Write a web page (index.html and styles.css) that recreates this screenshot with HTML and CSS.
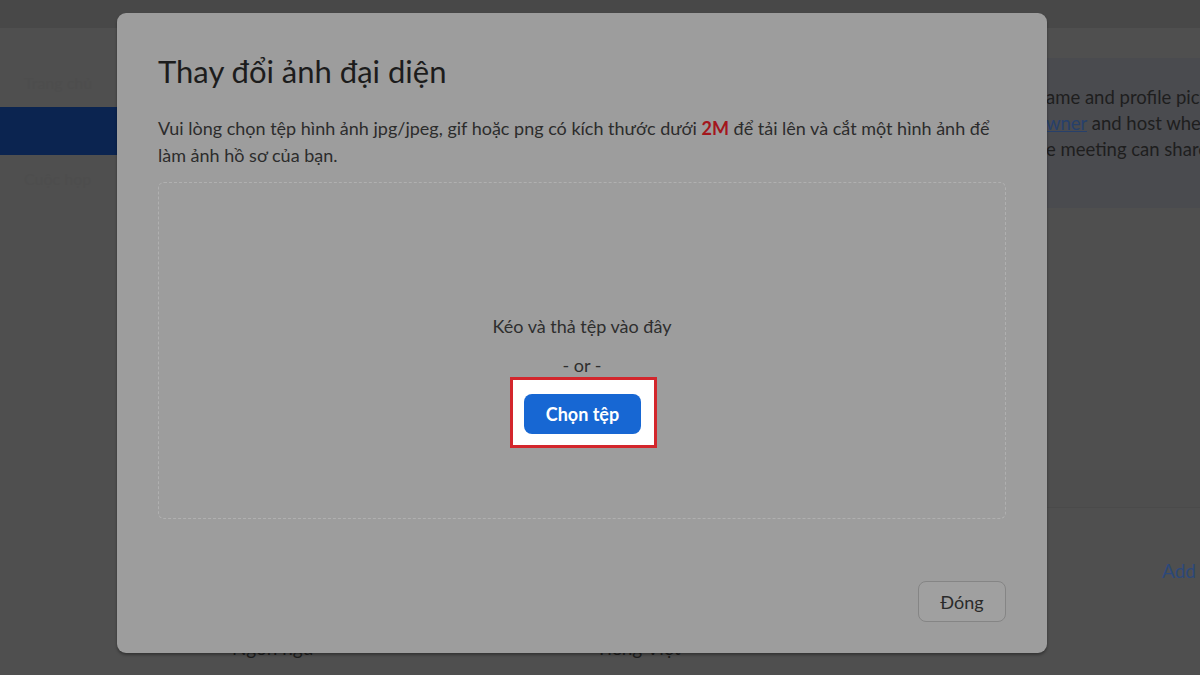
FILE: index.html
```html
<!DOCTYPE html>
<html lang="vi">
<head>
    <meta charset="UTF-8">
    <title>Hồ sơ - Thay đổi ảnh đại diện</title>
    <link rel="stylesheet" href="styles.css">
</head>
<body>
    <div class="page">
        <div class="topbar"></div>

        <div class="main">
            <div class="sidebar">
                <a class="side-link" href="#">Trang chủ</a>
                <a class="side-link active" href="#">Hồ sơ</a>
                <a class="side-link" href="#">Cuộc họp</a>
            </div>

            <div class="content">
                <div class="info">
                    <div class="info-line"><span class="lead">Your n</span><span>ame and profile picture</span></div>
                    <div class="info-line"><span class="lead">will be shown to the meeting <a href="#">o</a></span><span><a href="#">wner</a> and host when</span></div>
                    <div class="info-line"><span class="lead">other participants in th</span><span>e meeting can share</span></div>
                </div>

                <div class="section-head"></div>

                <div class="add-row">
                    <a class="add-link" href="#">Add</a>
                </div>

                <div class="setting-row">
                    <span class="setting-label">Ngôn ngữ</span>
                    <span class="setting-value">Tiếng Việt</span>
                </div>
            </div>
        </div>
    </div>

    <div class="overlay">
        <div class="modal">
            <h2 class="modal-title">Thay đổi ảnh đại diện</h2>
            <p class="modal-desc">
                Vui lòng chọn tệp hình ảnh jpg/jpeg, gif hoặc png có kích thước dưới <b class="limit">2M</b> để tải lên và cắt một hình ảnh để
                làm ảnh hồ sơ của bạn.
            </p>

            <div class="dropzone">
                <div class="drop-text">Kéo và thả tệp vào đây</div>
                <div class="drop-or">- or -</div>
                <div class="pick-box">
                    <button class="pick-button">Chọn tệp</button>
                </div>
            </div>

            <div class="modal-footer">
                <button class="close-button">Đóng</button>
            </div>
        </div>
    </div>
</body>
</html>
```

FILE: styles.css
```css
body {
    font-family: Lato, "Open Sans", sans-serif;
    margin: 0;
    padding: 0;
    width: 1200px;
    height: 675px;
    overflow: hidden;
    background-color: #4f4f4f;
    color: #1f1f1f;
}
.page {
    display: flex;
    flex-direction: column;
    height: 675px;
}
.topbar {
    height: 28px;
    background-color: #484848;
}
.main {
    display: flex;
    flex: 1;
}
.sidebar {
    width: 150px;
    flex-shrink: 0;
    padding-top: 31px;
    display: flex;
    flex-direction: column;
}
.side-link {
    display: block;
    height: 48px;
    line-height: 48px;
    padding-left: 24px;
    color: #4d4d4d;
    text-decoration: none;
    font-size: 16px;
}
.side-link.active {
    background-color: #0b2450;
    color: #0b2450;
}
.content {
    flex: 1;
    min-width: 0;
    display: flex;
    flex-direction: column;
    padding-left: 82px;
}
.info {
    margin-top: 30px;
    height: 150px;
    box-sizing: border-box;
    padding: 26px 0 0 20px;
    background-color: #4a4b4f;
    font-size: 18.5px;
    line-height: 26px;
    color: #1e1e1e;
    overflow: hidden;
}
.info-line {
    display: grid;
    grid-template-columns: 794px auto;
    white-space: nowrap;
}
.info-line .lead {
    text-align: right;
}
.info a {
    color: #27406b;
}
.section-head {
    margin-top: 262px;
    height: 37px;
    border-bottom: 1px solid #4a4a4a;
    background-color: #4e4e4e;
}
.add-row {
    margin-top: 52px;
    display: flex;
    justify-content: flex-end;
    font-size: 19px;
    line-height: 22px;
}
.add-link {
    color: #2c4879;
    text-decoration: none;
    margin-right: 4px;
}
.setting-row {
    margin-top: 55px;
    display: grid;
    grid-template-columns: 364px auto;
    font-size: 19px;
    line-height: 22px;
    color: #1e1e1e;
}

/* dialog layer */
.overlay {
    position: absolute;
    top: 0;
    left: 0;
    width: 1200px;
    height: 675px;
}
.modal {
    position: absolute;
    top: 13px;
    left: 117px;
    width: 930px;
    height: 640px;
    box-sizing: border-box;
    padding: 40px 41px 31px 41px;
    background-color: #9d9d9d;
    border-radius: 9px;
    box-shadow: 0 2px 3px rgba(0,0,0,0.35);
    display: flex;
    flex-direction: column;
}
.modal-title {
    margin: 0;
    font-size: 31px;
    font-weight: normal;
    line-height: 36px;
    color: #1c1c1c;
}
.modal-desc {
    margin: 26px 0 0 0;
    font-size: 18px;
    line-height: 27px;
    color: #2c2c2c;
}
.limit {
    color: #a3161c;
}
.dropzone {
    margin-top: 13px;
    height: 337px;
    box-sizing: border-box;
    padding-top: 132px;
    border: 1px dashed #b0b0b0;
    border-radius: 6px;
    display: flex;
    flex-direction: column;
    align-items: center;
    font-size: 18px;
    line-height: 22px;
    color: #2e2e2e;
}
.drop-or {
    margin-top: 17px;
}
.pick-box {
    margin-top: 1px;
    padding: 14px 13px 11px 11px;
    border: 3px solid #d3262c;
    background-color: #ffffff;
    margin-left: 3px;
}
.pick-button {
    display: block;
    width: 117px;
    height: 40px;
    border: none;
    border-radius: 8px;
    background-color: #1767d3;
    color: white;
    font-family: Lato, "Open Sans", sans-serif;
    font-size: 18px;
    font-weight: bold;
    cursor: pointer;
}
.modal-footer {
    margin-top: auto;
    display: flex;
    justify-content: flex-end;
}
.close-button {
    width: 88px;
    height: 41px;
    border: 1px solid #858585;
    border-radius: 8px;
    background-color: #a0a0a0;
    color: #2a2a2a;
    font-family: Lato, "Open Sans", sans-serif;
    font-size: 18px;
    cursor: pointer;
}
```
